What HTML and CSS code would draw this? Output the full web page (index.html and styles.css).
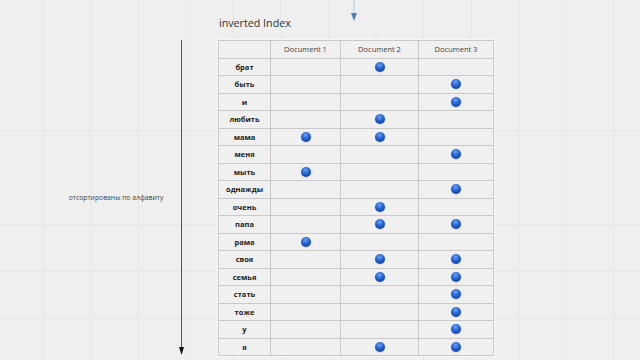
FILE: index.html
```html
<!DOCTYPE html>
<html>
<head>
<meta charset="utf-8">
<link rel="stylesheet" href="styles.css">
</head>
<body>
<div class="page">
  <div class="top">
    <h1 class="title">inverted Index</h1>
    <svg class="conn" width="10" height="24" viewBox="0 0 10 24">
      <line x1="5" y1="0" x2="5" y2="14" stroke="#a9c7ee" stroke-width="1"/>
      <polygon points="2,13 8,13 5,21" fill="#4a7fcf"/>
    </svg>
  </div>
  <div class="main">
    <div class="side"><span class="label">отсортированы по алфавиту</span></div>
    <svg class="axis" width="9" height="316" viewBox="0 0 9 316">
      <line x1="4.5" y1="0" x2="4.5" y2="308" stroke="#555" stroke-width="1"/>
      <polygon points="2,307 7,307 4.5,315" fill="#111"/>
    </svg>
    <div class="table">
      <div class="c"></div><div class="c h">Document 1</div><div class="c h">Document 2</div><div class="c h">Document 3</div>
      <div class="c w">брат</div><div class="c"></div><div class="c"><i class="dot"></i></div><div class="c"></div>
      <div class="c w">быть</div><div class="c"></div><div class="c"></div><div class="c"><i class="dot"></i></div>
      <div class="c w">и</div><div class="c"></div><div class="c"></div><div class="c"><i class="dot"></i></div>
      <div class="c w">любить</div><div class="c"></div><div class="c"><i class="dot"></i></div><div class="c"></div>
      <div class="c w">мама</div><div class="c"><i class="dot"></i></div><div class="c"><i class="dot"></i></div><div class="c"></div>
      <div class="c w">меня</div><div class="c"></div><div class="c"></div><div class="c"><i class="dot"></i></div>
      <div class="c w">мыть</div><div class="c"><i class="dot"></i></div><div class="c"></div><div class="c"></div>
      <div class="c w">однажды</div><div class="c"></div><div class="c"></div><div class="c"><i class="dot"></i></div>
      <div class="c w">очень</div><div class="c"></div><div class="c"><i class="dot"></i></div><div class="c"></div>
      <div class="c w">папа</div><div class="c"></div><div class="c"><i class="dot"></i></div><div class="c"><i class="dot"></i></div>
      <div class="c w">рама</div><div class="c"><i class="dot"></i></div><div class="c"></div><div class="c"></div>
      <div class="c w">своя</div><div class="c"></div><div class="c"><i class="dot"></i></div><div class="c"><i class="dot"></i></div>
      <div class="c w">семья</div><div class="c"></div><div class="c"><i class="dot"></i></div><div class="c"><i class="dot"></i></div>
      <div class="c w">стать</div><div class="c"></div><div class="c"></div><div class="c"><i class="dot"></i></div>
      <div class="c w">тоже</div><div class="c"></div><div class="c"></div><div class="c"><i class="dot"></i></div>
      <div class="c w">у</div><div class="c"></div><div class="c"></div><div class="c"><i class="dot"></i></div>
      <div class="c w">я</div><div class="c"></div><div class="c"><i class="dot"></i></div><div class="c"><i class="dot"></i></div>
    </div>
  </div>
</div>
</body>
</html>
```
FILE: styles.css
```css
html, body {
  margin: 0;
  padding: 0;
}
body {
  width: 640px;
  height: 360px;
  overflow: hidden;
  background-color: #efefef;
  background-image:
    linear-gradient(to right, #e6e6e6 1px, transparent 1px),
    linear-gradient(to bottom, #e6e6e6 1px, transparent 1px);
  background-size: 47.5px 47px;
  background-position: 43px 36px;
  font-family: "Open Sans", "Liberation Sans", sans-serif;
}
.page {
  display: flex;
  flex-direction: column;
}
.top {
  position: relative;
  height: 40px;
}
.title {
  margin: 0;
  padding: 15px 0 0 219px;
  font-size: 10.7px;
  font-weight: 400;
  color: #333;
  line-height: 16px;
}
.conn {
  position: absolute;
  left: 349px;
  top: 0;
}
.main {
  display: flex;
  align-items: flex-start;
}
.side {
  width: 122px;
  padding-left: 55px;
  height: 315px;
  display: flex;
  align-items: center;
  justify-content: center;
}
.label {
  font-size: 6.8px;
  color: #444;
  white-space: nowrap;
}
.axis {
  display: block;
  margin-right: 32px;
}
.table {
  display: grid;
  grid-template-columns: 52px 70px 78px 75px;
  grid-template-rows: repeat(18, 17.5px);
  border-left: 1px solid #c9c9c9;
  border-top: 1px solid #c9c9c9;
  box-shadow: 0 0 0 1px #f7f7f7;
  background: #f0f0f0;
}
.c {
  box-sizing: border-box;
  border-right: 1px solid #c9c9c9;
  border-bottom: 1px solid #c9c9c9;
  display: flex;
  align-items: center;
  justify-content: center;
  font-size: 7.5px;
  color: #222;
}
.h {
  color: #444;
}
.w {
  font-weight: 700;
}
.dot {
  display: block;
  width: 10px;
  height: 10px;
  border-radius: 50%;
  background: radial-gradient(circle at 45% 30%, #6aa6f5 0%, #2766d6 40%, #0f3fa8 80%, #0a2f86 100%);
  box-shadow: 0 0.5px 1px rgba(0,0,0,0.25);
}
```
